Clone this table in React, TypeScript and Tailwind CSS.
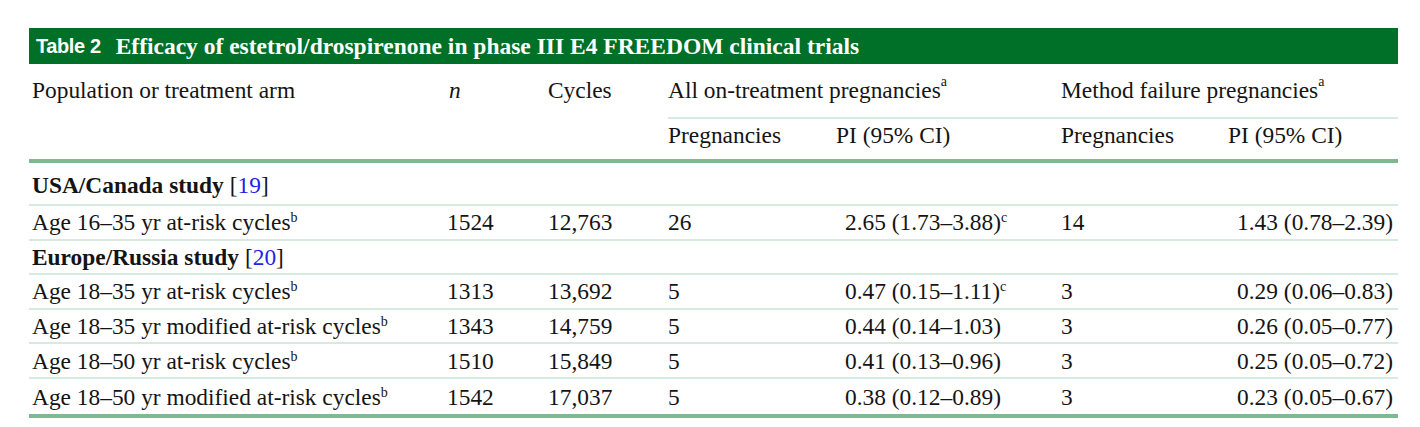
import React from 'react';

const cols = 'grid grid-cols-[418px_101px_120px_168px_225px_167px_170px]';

interface Row {
  label: string;
  n: string;
  cycles: string;
  allPreg: string;
  allPi: string;
  allNote?: string;
  mfPreg: string;
  mfPi: string;
}

const usaRows: Row[] = [
  { label: 'Age 16–35 yr at-risk cycles', n: '1524', cycles: '12,763', allPreg: '26', allPi: '2.65 (1.73–3.88)', allNote: 'c', mfPreg: '14', mfPi: '1.43 (0.78–2.39)' },
];

const euRows: Row[] = [
  { label: 'Age 18–35 yr at-risk cycles', n: '1313', cycles: '13,692', allPreg: '5', allPi: '0.47 (0.15–1.11)', allNote: 'c', mfPreg: '3', mfPi: '0.29 (0.06–0.83)' },
  { label: 'Age 18–35 yr modified at-risk cycles', n: '1343', cycles: '14,759', allPreg: '5', allPi: '0.44 (0.14–1.03)', mfPreg: '3', mfPi: '0.26 (0.05–0.77)' },
  { label: 'Age 18–50 yr at-risk cycles', n: '1510', cycles: '15,849', allPreg: '5', allPi: '0.41 (0.13–0.96)', mfPreg: '3', mfPi: '0.25 (0.05–0.72)' },
  { label: 'Age 18–50 yr modified at-risk cycles', n: '1542', cycles: '17,037', allPreg: '5', allPi: '0.38 (0.12–0.89)', mfPreg: '3', mfPi: '0.23 (0.05–0.67)' },
];

const Sup = ({ children }: { children: React.ReactNode }) => (
  <sup className="text-[14px] -top-[8px]">{children}</sup>
);

const DataRow = ({ row, last }: { row: Row; last?: boolean }) => (
  <div className={`${cols} items-center ${last ? 'h-[35.5px]' : 'h-[34.6px] border-b-2 border-[#d6eadd]'}`}>
    <div className="pl-[3px]">
      {row.label}
      <Sup>b</Sup>
    </div>
    <div>{row.n}</div>
    <div>{row.cycles}</div>
    <div>{row.allPreg}</div>
    <div className="pl-[9px]">
      {row.allPi}
      {row.allNote && <Sup>{row.allNote}</Sup>}
    </div>
    <div>{row.mfPreg}</div>
    <div className="text-right pr-[5px]">{row.mfPi}</div>
  </div>
);

const SectionRow = ({ title, ref_, tall }: { title: string; ref_: string; tall?: boolean }) => (
  <div className={`flex items-center pl-[3px] border-b-2 border-[#d6eadd] ${tall ? 'h-[43px] pt-[2px]' : 'h-[34.6px]'}`}>
    <span className="font-bold">{title}</span>
    <span className="ml-[6px]">
      [<span className="text-[#2323e6]">{ref_}</span>]
    </span>
  </div>
);

export default function App() {
  return (
    <div className="w-full h-[427px] bg-white pt-[28px] pl-[29px] text-[#141414] font-['Liberation_Serif',serif] text-[23.4px] leading-[28px]">
      <div className="w-[1369px]">
        <div className="h-[36px] bg-[#006f27] flex items-center pl-[7px] text-white">
          <span className="font-['Liberation_Sans',sans-serif] font-bold text-[20px] tracking-[-0.4px]">Table 2</span>
          <span className="ml-[15px] font-bold text-[23.5px]">
            Efficacy of estetrol/drospirenone in phase III E4 FREEDOM clinical trials
          </span>
        </div>

        <div className={`${cols} h-[55px]`}>
          <div className="pl-[3px] pb-[3px] flex items-center">Population or treatment arm</div>
          <div className="flex items-center pb-[3px] pl-[2px] italic">n</div>
          <div className="flex items-center pb-[3px]">Cycles</div>
          <div className="col-span-2 flex items-center pb-[1px] border-b-2 border-[#d6eadd]">
            All on-treatment pregnancies<Sup>a</Sup>
          </div>
          <div className="col-span-2 flex items-center pb-[1px] border-b-2 border-[#d6eadd]">
            Method failure pregnancies<Sup>a</Sup>
          </div>
        </div>
        <div className={`${cols} h-[40px] pt-[2px]`}>
          <div />
          <div />
          <div />
          <div>Pregnancies</div>
          <div>PI (95% CI)</div>
          <div>Pregnancies</div>
          <div>PI (95% CI)</div>
        </div>
        <div className="h-[4px] bg-[#7fb891]" />

        <SectionRow title="USA/Canada study" ref_="19" tall />
        {usaRows.map((r) => (
          <DataRow key={r.label} row={r} />
        ))}
        <SectionRow title="Europe/Russia study" ref_="20" />
        {euRows.map((r, i) => (
          <DataRow key={r.label} row={r} last={i === euRows.length - 1} />
        ))}
        <div className="h-[4px] bg-[#7fb891]" />
      </div>
    </div>
  );
}
